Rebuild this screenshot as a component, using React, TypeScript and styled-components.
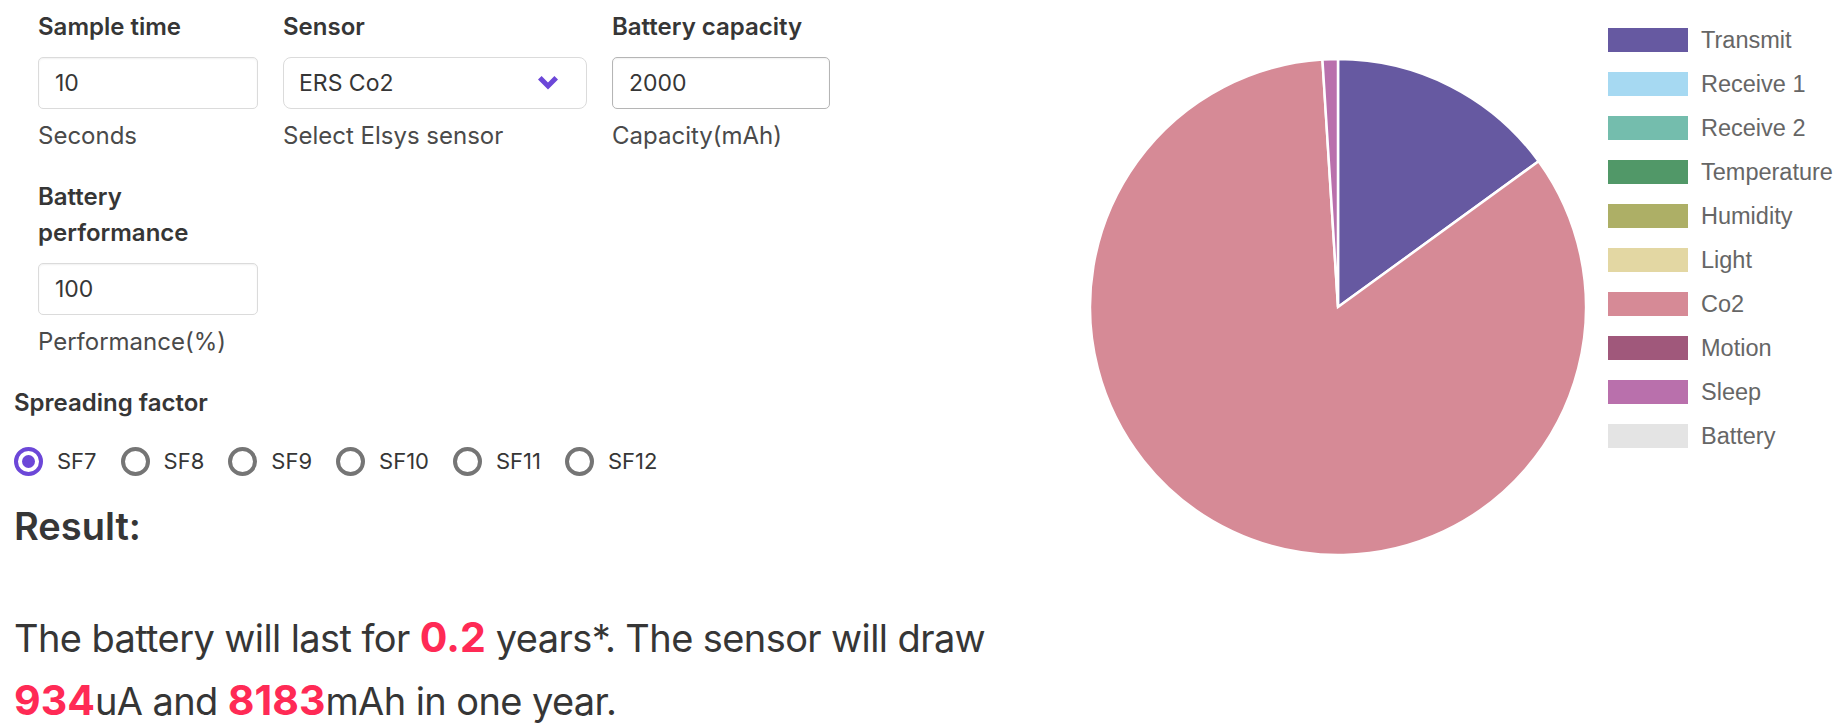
import React from "react";
import styled, { createGlobalStyle } from "styled-components";

const GlobalStyle = createGlobalStyle`
  body {
    margin: 0;
    background: #ffffff;
    font-family: Inter, "Open Sans", sans-serif;
    color: #363636;
  }
`;

const PURPLE = "#6c47d8";

const slices = [
  { label: "Transmit", color: "#6659a1", value: 15 },
  { label: "Receive 1", color: "#a6d9f2", value: 0 },
  { label: "Receive 2", color: "#74bdad", value: 0 },
  { label: "Temperature", color: "#519868", value: 0 },
  { label: "Humidity", color: "#adaf66", value: 0 },
  { label: "Light", color: "#e3d7a3", value: 0 },
  { label: "Co2", color: "#d68a96", value: 84 },
  { label: "Motion", color: "#a0587b", value: 0 },
  { label: "Sleep", color: "#b970ac", value: 1 },
  { label: "Battery", color: "#e4e4e4", value: 0 },
];

const factors = ["SF7", "SF8", "SF9", "SF10", "SF11", "SF12"];

const Page = styled.div`
  display: flex;
  align-items: flex-start;
  padding: 9px 0 0 14px;
`;

const FormColumn = styled.div`
  width: 1020px;
  flex-shrink: 0;
`;

const FieldRow = styled.div`
  display: flex;
  gap: 25px;
  padding-left: 24px;
  margin-bottom: 28px;
`;

const Field = styled.div<{ $width: number }>`
  width: ${(p) => p.$width}px;
`;

const Label = styled.div`
  font-size: 24px;
  font-weight: 600;
  line-height: 36px;
  color: #363636;
  margin-bottom: 12px;
`;

const TextInput = styled.input<{ $hover?: boolean }>`
  box-sizing: border-box;
  width: 100%;
  height: 52px;
  padding: 0 16px;
  font-family: inherit;
  font-size: 23px;
  color: #363636;
  background: #fff;
  border: 1px solid ${(p) => (p.$hover ? "#b5b5b5" : "#dbdbdb")};
  border-radius: 5px;
  box-shadow: inset 0 1px 2px rgba(10, 10, 10, 0.06);
  outline: none;
`;

const SelectBox = styled.div`
  box-sizing: border-box;
  display: flex;
  align-items: center;
  justify-content: space-between;
  height: 52px;
  padding: 0 28px 0 15px;
  font-size: 23px;
  color: #363636;
  border: 1px solid #dbdbdb;
  border-radius: 8px;
`;

const Help = styled.div`
  font-size: 24px;
  line-height: 30px;
  margin-top: 12px;
  color: #4a4a4a;
`;

const PlainLabel = styled(Label)`
  margin-bottom: 25px;
`;

const RadioRow = styled.div`
  display: flex;
  align-items: center;
  gap: 24px;
  height: 30px;
`;

const RadioOption = styled.label`
  display: flex;
  align-items: center;
  gap: 14px;
  font-size: 22px;
  color: #363636;
`;

const RadioInput = styled.input`
  appearance: none;
  box-sizing: border-box;
  margin: 0;
  width: 29px;
  height: 29px;
  border-radius: 50%;
  border: 4px solid #757575;
  display: grid;
  place-items: center;

  &:checked {
    border-color: ${PURPLE};
  }

  &:checked::after {
    content: "";
    width: 13px;
    height: 13px;
    border-radius: 50%;
    background: ${PURPLE};
  }
`;

const ResultTitle = styled.h2`
  margin: 29px 0 0;
  font-size: 38px;
  font-weight: 600;
  line-height: 43px;
  color: #363636;
`;

const ResultText = styled.p`
  margin: 58px 0 0;
  font-size: 38px;
  letter-spacing: -0.6px;
  line-height: 62px;
  color: #363636;
`;

const Value = styled.strong`
  color: #ff2a55;
  font-weight: 700;
  font-size: 1.08em;
  letter-spacing: 0;
`;

const ChartArea = styled.div`
  display: flex;
  align-items: flex-start;
  margin-left: 52px;
`;

const PieSvg = styled.svg`
  margin-top: 46px;
  flex-shrink: 0;
`;

const Legend = styled.ul`
  list-style: none;
  margin: 9px 0 0 18px;
  padding: 0;
`;

const LegendItem = styled.li`
  display: flex;
  align-items: center;
  gap: 13px;
  height: 44px;
  font-family: "Liberation Sans", Arial, sans-serif;
  font-size: 23.5px;
  color: #666666;
  white-space: nowrap;
`;

const Swatch = styled.span<{ $color: string }>`
  width: 80px;
  height: 24px;
  background: ${(p) => p.$color};
`;

const Chevron = () => (
  <svg width="20" height="14" viewBox="0 0 20 14">
    <path d="M0 3.6 L3.6 0 L10 6.4 L16.4 0 L20 3.6 L10 13.6 Z" fill={PURPLE} />
  </svg>
);

const Pie = () => {
  const size = 504;
  const c = size / 2;
  const r = 248;
  const total = slices.reduce((s, x) => s + x.value, 0);
  let angle = 0;
  const point = (a: number) => {
    const rad = (a * Math.PI) / 180;
    return `${c + r * Math.sin(rad)} ${c - r * Math.cos(rad)}`;
  };
  return (
    <PieSvg width={size} height={size} viewBox={`0 0 ${size} ${size}`}>
      {slices
        .filter((s) => s.value > 0)
        .map((s) => {
          const start = angle;
          const sweep = (s.value / total) * 360;
          angle += sweep;
          const large = sweep > 180 ? 1 : 0;
          const d = `M${c} ${c} L${point(start)} A${r} ${r} 0 ${large} 1 ${point(angle)} Z`;
          return <path key={s.label} d={d} fill={s.color} stroke="#fff" strokeWidth={2.5} />;
        })}
    </PieSvg>
  );
};

export default function App() {
  return (
    <>
      <GlobalStyle />
      <Page>
        <FormColumn>
          <FieldRow>
            <Field $width={220}>
              <Label>Sample time</Label>
              <TextInput defaultValue="10" />
              <Help>Seconds</Help>
            </Field>
            <Field $width={304}>
              <Label>Sensor</Label>
              <SelectBox>
                <span>ERS Co2</span>
                <Chevron />
              </SelectBox>
              <Help>Select Elsys sensor</Help>
            </Field>
            <Field $width={218}>
              <Label>Battery capacity</Label>
              <TextInput defaultValue="2000" $hover />
              <Help>Capacity(mAh)</Help>
            </Field>
          </FieldRow>
          <FieldRow>
            <Field $width={220}>
              <Label>Battery performance</Label>
              <TextInput defaultValue="100" />
              <Help>Performance(%)</Help>
            </Field>
          </FieldRow>

          <PlainLabel>Spreading factor</PlainLabel>
          <RadioRow>
            {factors.map((f) => (
              <RadioOption key={f}>
                <RadioInput type="radio" name="sf" defaultChecked={f === "SF7"} />
                {f}
              </RadioOption>
            ))}
          </RadioRow>

          <ResultTitle>Result:</ResultTitle>
          <ResultText>
            The battery will last for <Value>0.2</Value> years*. The sensor will draw{" "}
            <Value>934</Value>uA and <Value>8183</Value>mAh in one year.
          </ResultText>
        </FormColumn>

        <ChartArea>
          <Pie />
          <Legend>
            {slices.map((s) => (
              <LegendItem key={s.label}>
                <Swatch $color={s.color} />
                {s.label}
              </LegendItem>
            ))}
          </Legend>
        </ChartArea>
      </Page>
    </>
  );
}
